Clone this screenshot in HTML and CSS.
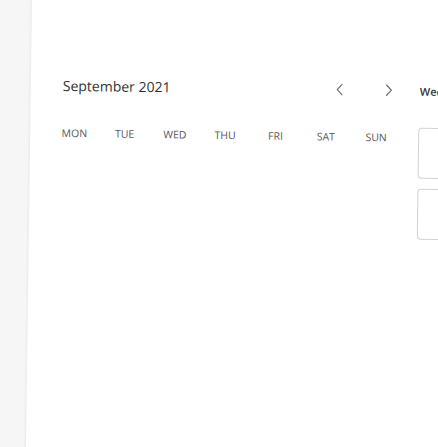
FILE: index.html
```html
<!DOCTYPE html>
<html>
<head>
<meta charset="utf-8">
<link rel="stylesheet" href="styles.css">
</head>
<body>
<div class="page">
  <div class="strip"></div>
  <div class="panel">
    <div class="calendar">
      <div class="cal-header">
        <div class="title">September 2021</div>
        <div class="nav">
          <button class="nav-btn" aria-label="Previous month">
            <svg width="8" height="14" viewBox="0 0 8 14"><polyline points="6.5,1.5 1.5,7 6.5,12.5" fill="none" stroke="#6f6f6f" stroke-width="1.2"/></svg>
          </button>
          <button class="nav-btn" aria-label="Next month">
            <svg width="8" height="14" viewBox="0 0 8 14"><polyline points="1.5,1.5 6.5,7 1.5,12.5" fill="none" stroke="#6f6f6f" stroke-width="1.2"/></svg>
          </button>
        </div>
      </div>
      <div class="days">
        <div class="day">MON</div>
        <div class="day">TUE</div>
        <div class="day">WED</div>
        <div class="day">THU</div>
        <div class="day">FRI</div>
        <div class="day">SAT</div>
        <div class="day">SUN</div>
      </div>
    </div>
    <div class="side">
      <div class="side-title">Week</div>
      <div class="slot"></div>
      <div class="slot"></div>
    </div>
  </div>
</div>
</body>
</html>
```
FILE: styles.css
```css
html, body {
  margin: 0;
  padding: 0;
  overflow: hidden;
  background: #f6f6f6;
}
body {
  width: 438px;
  height: 447px;
  font-family: "Open Sans", "Liberation Sans", sans-serif;
}
.page {
  width: 520px;
  height: 520px;
  margin: -30px 0 0 -10px;
  display: flex;
  transform: rotate(0.77deg);
  transform-origin: 229px 253px;
}
.strip {
  width: 39px;
  flex: none;
  background: #f6f6f6;
}
.panel {
  flex: 1;
  background: #fff;
  box-shadow: -1px 0 3px rgba(0, 0, 0, 0.06);
  display: flex;
  padding: 110px 0 0 32px;
  gap: 17px;
  overflow: hidden;
}
.calendar {
  width: 339px;
  flex: none;
}
.cal-header {
  display: flex;
  align-items: center;
  justify-content: space-between;
  height: 16px;
}
.title {
  font-size: 14px;
  line-height: 16px;
  color: #333;
}
.nav {
  display: flex;
  gap: 19px;
  margin-right: -2px;
}
.nav-btn {
  width: 30px;
  height: 16px;
  border: 0;
  padding: 0;
  background: transparent;
  display: flex;
  align-items: center;
  justify-content: center;
}
.days {
  display: grid;
  grid-template-columns: repeat(7, 50.3px);
  margin: 33px 0 0 -13px;
}
.day {
  text-align: center;
  font-size: 10.5px;
  line-height: 12px;
  color: #585858;
}
.side {
  width: 140px;
  flex: none;
  display: flex;
  flex-direction: column;
}
.side-title {
  font-size: 11px;
  line-height: 14px;
  font-weight: 600;
  color: #333;
  margin: 2px 0 0 1px;
}
.slot {
  height: 49px;
  border: 1px solid #d2d2d2;
  border-radius: 4px;
  margin-top: 10px;
}
.side-title + .slot {
  margin-top: 29px;
}
```
